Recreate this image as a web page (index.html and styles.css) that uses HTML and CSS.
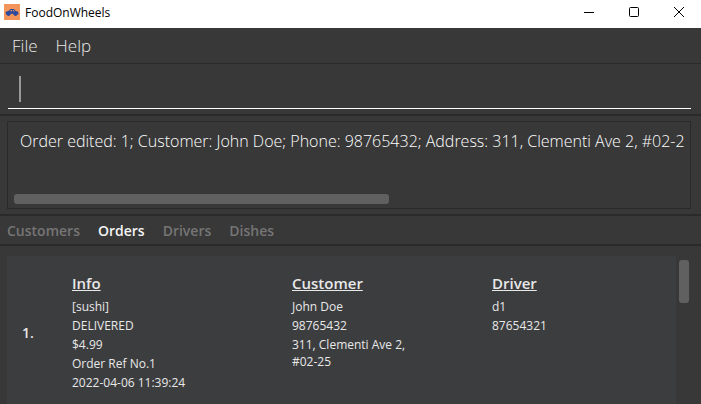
FILE: index.html
```html
<!DOCTYPE html>
<html lang="en">
<head>
<meta charset="utf-8">
<title>FoodOnWheels</title>
<link rel="stylesheet" href="styles.css">
</head>
<body>
<header class="titlebar">
  <svg class="logo" viewBox="0 0 16 16" width="16" height="16" aria-hidden="true">
    <rect width="16" height="16" fill="#f3945a"/>
    <path d="M1.5 8.5 3 7.2 5 6.8 6.4 5H10l1.8 2 2 .6.9 2-.9 1.2H2.2z" fill="#2c4a9e"/>
    <path d="M7 6h1v1.2H6.2zM9 6h.8l.9 1.2H9z" fill="#f3945a"/>
    <circle cx="4.5" cy="10.5" r="1.5" fill="#2c4a9e"/>
    <circle cx="11.5" cy="10.5" r="1.5" fill="#2c4a9e"/>
    <path d="M6.8 9.8h2.4V12H6.8z" fill="#f3945a"/>
  </svg>
  <span class="app-name">FoodOnWheels</span>
  <div class="window-controls">
    <button type="button" aria-label="Minimize"><svg viewBox="0 0 10 10" width="10" height="10"><path d="M0 5.5h10"/></svg></button>
    <button type="button" aria-label="Maximize"><svg viewBox="0 0 10 10" width="10" height="10"><rect x=".5" y=".5" width="9" height="9" rx="1"/></svg></button>
    <button type="button" aria-label="Close"><svg viewBox="0 0 10 10" width="10" height="10"><path d="M0 0l10 10M10 0 0 10"/></svg></button>
  </div>
</header>
<nav class="menubar">
  <button type="button">File</button>
  <button type="button">Help</button>
</nav>
<main class="content">
  <div class="command">
    <input class="command-input" type="text" aria-label="Command">
    <span class="caret"></span>
  </div>
  <section class="result">
    <div class="result-box">
      <textarea class="result-text" aria-label="Result" rows="1" wrap="off" readonly>Order edited: 1; Customer: John Doe; Phone: 98765432; Address: 311, Clementi Ave 2, #02-2</textarea>
      <div class="result-thumb"></div>
    </div>
  </section>
  <nav class="tabs">
    <button type="button">Customers</button>
    <button type="button" class="active">Orders</button>
    <button type="button">Drivers</button>
    <button type="button">Dishes</button>
  </nav>
  <section class="list">
    <article class="order">
      <span class="order-index">1.</span>
      <div class="group">
        <h2>Info</h2>
        <p>[sushi]</p>
        <p>DELIVERED</p>
        <p>$4.99</p>
        <p>Order Ref No.1</p>
        <p>2022-04-06 11:39:24</p>
      </div>
      <div class="group">
        <h2>Customer</h2>
        <p>John Doe</p>
        <p>98765432</p>
        <p class="address">311, Clementi Ave 2, #02-25</p>
      </div>
      <div class="group">
        <h2>Driver</h2>
        <p>d1</p>
        <p>87654321</p>
      </div>
    </article>
    <div class="list-track"><div class="list-thumb"></div></div>
  </section>
</main>
</body>
</html>
```
FILE: styles.css
```css
* { box-sizing: border-box; }

html, body { height: 100%; }

body {
  margin: 0;
  display: flex;
  flex-direction: column;
  overflow: hidden;
  background: #383838;
  color: #e8e8e8;
  font-family: "Open Sans", "Noto Sans", sans-serif;
  font-size: 12px;
}

button, input, textarea {
  margin: 0;
  padding: 0;
  border: 0;
  outline: 0;
  background: none;
  color: inherit;
  font: inherit;
}

.titlebar {
  display: flex;
  align-items: center;
  flex: none;
  height: 28px;
  padding-left: 4px;
  padding-bottom: 4px;
  background: #fff;
  color: #000;
}

.app-name { margin-left: 5px; font-size: 12px; }

.window-controls { display: flex; margin-left: auto; }

.window-controls button {
  display: flex;
  align-items: center;
  justify-content: center;
  width: 45px;
  height: 24px;
}

.window-controls svg { fill: none; stroke: #000; overflow: visible; }

.menubar {
  display: flex;
  gap: 18px;
  flex: none;
  height: 36px;
  padding-left: 12px;
  border-bottom: 1px solid #2a2a2a;
  font-size: 17px;
  font-weight: 300;
}

.content { display: flex; flex-direction: column; flex: 1; min-height: 0; }

.command {
  position: relative;
  flex: none;
  padding: 4px 10px 5px 8px;
  border-bottom: 2px solid #2a2a2a;
}

.command-input {
  display: block;
  width: 100%;
  height: 41px;
  padding: 0 12px;
  border-bottom: 1px solid #fff;
  font-size: 17px;
  font-weight: 300;
}

.caret {
  position: absolute;
  left: 19px;
  top: 12px;
  width: 2px;
  height: 26px;
  background: #999;
}

.result { flex: none; padding: 5px 10px 5px 7px; border-bottom: 2px solid #2a2a2a; }

.result-box {
  display: flex;
  flex-direction: column;
  justify-content: space-between;
  height: 88px;
  padding: 7px 0 4px;
  border: 1px solid #2a2a2a;
}

.result-text {
  display: block;
  width: 100%;
  height: 24px;
  padding-left: 12px;
  overflow: hidden;
  resize: none;
  font-size: 16px;
  font-weight: 300;
  line-height: 24px;
  color: #fff;
}

.result-thumb {
  width: 55%;
  height: 10px;
  margin-left: 6px;
  border-radius: 3px;
  background: #606060;
}

.tabs {
  display: flex;
  gap: 18px;
  flex: none;
  height: 30px;
  padding-left: 7px;
  border-bottom: 2px solid #2a2a2a;
  font-size: 14px;
  font-weight: 600;
  color: #757575;
}

.tabs .active { color: #f4f4f4; }

.list { display: flex; flex: 1; min-height: 0; padding: 10px 10px 0 7px; }

.order {
  display: grid;
  grid-template-columns: 50px 220px 200px 1fr;
  flex: 1;
  align-items: start;
  padding: 16px 0 12px 15px;
  background: #3c3d3f;
}

.order-index { align-self: center; font-size: 14px; font-weight: 600; }

.group h2 {
  margin: 0 0 4px;
  font-size: 15px;
  font-weight: 600;
  line-height: 22px;
  text-decoration: underline;
}

.group p { margin: 0 0 2px; line-height: 17px; }

.address { max-width: 130px; }

.list-track { width: 15px; padding: 4px 2px 0 3px; }

.list-thumb { height: 43px; border-radius: 3px; background: #606060; }
```
